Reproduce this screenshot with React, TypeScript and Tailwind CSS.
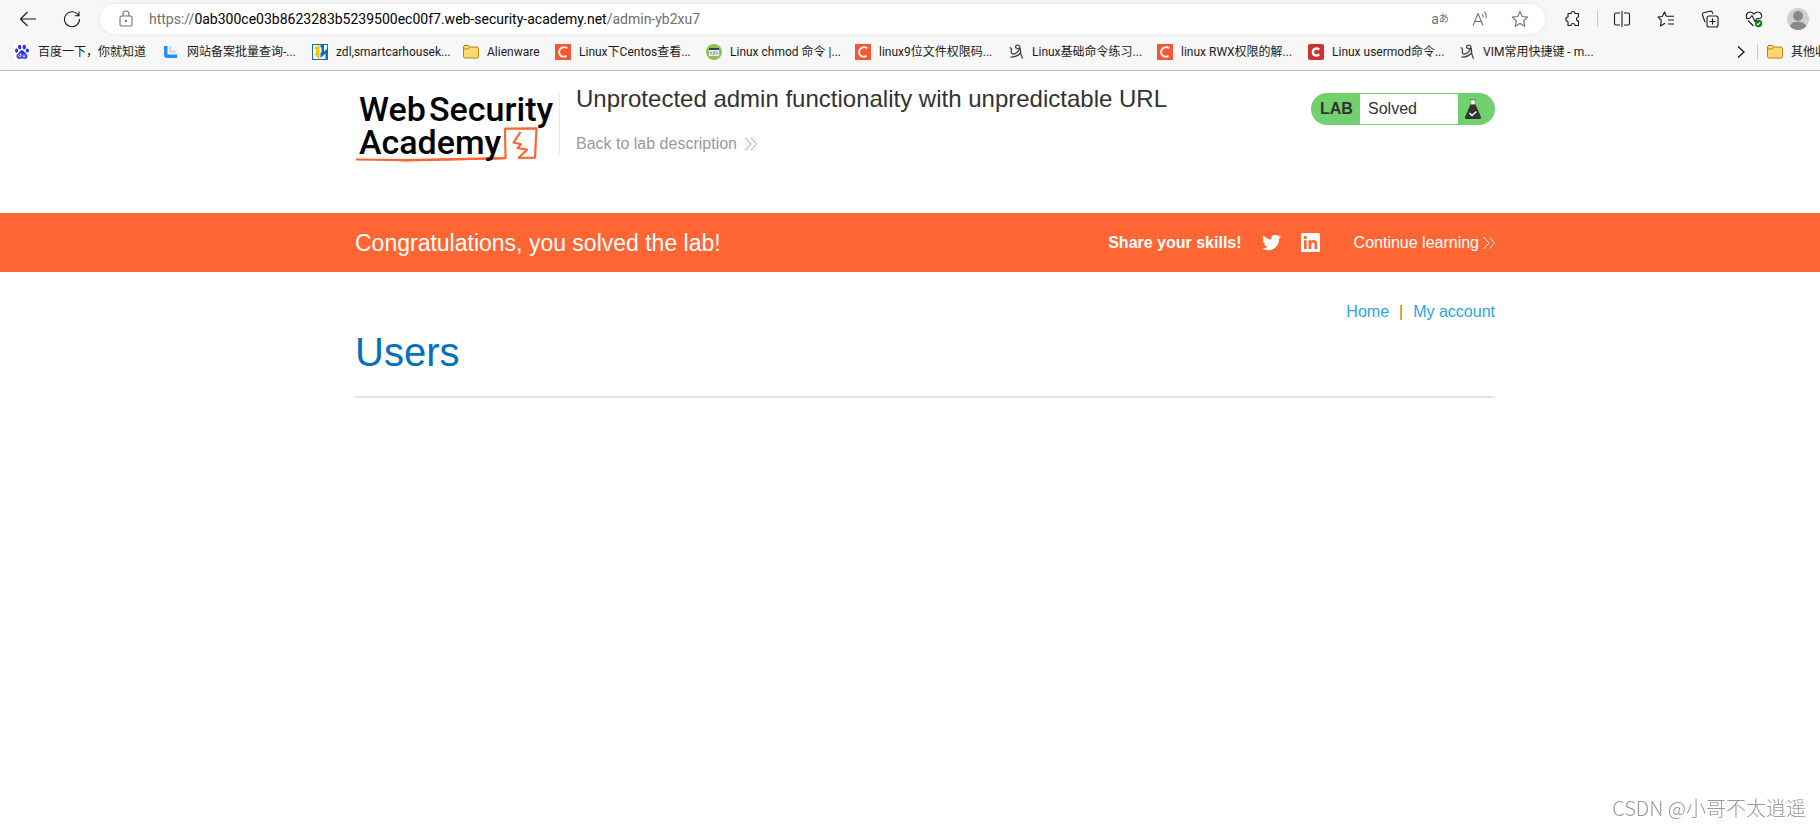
import type { ReactNode } from 'react'

function BaiduIcon() {
  return (
    <svg viewBox="0 0 16 16" className="w-4 h-4 shrink-0">
      <rect width="16" height="16" fill="#fff" />
      <g fill="#2932e1">
        <ellipse cx="5.7" cy="3.1" rx="1.7" ry="2.3" />
        <ellipse cx="10.3" cy="3.1" rx="1.7" ry="2.3" />
        <ellipse cx="2.6" cy="6.6" rx="1.6" ry="2.1" />
        <ellipse cx="13.4" cy="6.6" rx="1.6" ry="2.1" />
        <path d="M8 6.2c1.8 0 2.3 1.6 3.5 2.7 1.4 1.200 2.300 2.300 1.800 4.100-.5 1.700-2 2-3.300 1.700-1.300-.3-2.700-.3-4 0-1.300.3-2.800 0-3.300-1.700-.5-1.800.4-2.900 1.800-4.100C5.700 7.800 6.200 6.200 8 6.200Z" />
      </g>
      <path d="M6.800 9v3.800H5.500a1 1 0 0 1 0-2.200h1.300M9 10.500v2.300h2v-2.300" fill="none" stroke="#fff" strokeWidth=".8" />
    </svg>
  )
}

function FilingIcon() {
  return (
    <svg viewBox="0 0 16 16" className="w-4 h-4 shrink-0">
      <path d="M1 2h3.500v8.500H14V14H4a3 3 0 0 1-3-3V2Z" fill="#1e90ff" />
      <path d="M6 2h2.500v4.500H13V9H6V2Z" fill="#d3dbe2" />
    </svg>
  )
}

function ZdlIcon() {
  return (
    <svg viewBox="0 0 16 16" className="w-4 h-4 shrink-0">
      <rect x=".5" y=".5" width="15" height="15" fill="#fff" stroke="#0a6ebd" />
      <path d="M3 3 7.500 1v14H6.500L2 9.500h2V5L2 5.500Z" fill="#f5c400" />
      <path d="M8.500 1H12v6.500L15 5v10h-1.500V9.500L8.500 14V9L9.500 8V3.500H8.500Z" fill="#0a6ebd" />
    </svg>
  )
}

function FolderIcon() {
  return (
    <svg viewBox="0 0 16 16" className="w-4 h-4 shrink-0" fill="#ffd970" stroke="#b8860b">
      <path d="M.5 4V3A1.500 1.500 0 0 1 2 1.500h3.500L7.200 3H14a1.500 1.500 0 0 1 1.500 1.500v8A1.500 1.500 0 0 1 14 14H2a1.500 1.500 0 0 1-1.500-1.500V4Z" />
      <path d="M.5 5h4.700l2-2" fill="none" />
    </svg>
  )
}

function CsdnIcon() {
  return (
    <svg viewBox="0 0 16 16" className="w-4 h-4 shrink-0">
      <rect width="16" height="16" fill="#fc5531" />
      <path d="M12.200 4.300C9.500 2.300 4.300 3 4.100 8c0 5 4.600 5.400 7.600 3.900" fill="none" stroke="#fff" strokeWidth="1.800" />
    </svg>
  )
}

function RedCIcon() {
  return (
    <svg viewBox="0 0 16 16" className="w-4 h-4 shrink-0">
      <rect width="16" height="16" rx="2" fill="#d1302a" />
      <path d="M11.200 5.500C9 3.600 5 4.200 4.900 8c0 3.900 4 4.300 6.300 2.500" fill="none" stroke="#fff" strokeWidth="2.400" />
    </svg>
  )
}

function RunoobIcon() {
  return (
    <svg viewBox="0 0 16 16" className="w-4 h-4 shrink-0">
      <circle cx="8" cy="8" r="8" fill="#8cc152" />
      <path d="M3 4h10v8H3Z" fill="#e8eef2" />
      <path d="M3 4h10v2H3Z" fill="#33475b" />
      <path d="m6 7.500-1.500 1.500L6 10.500m4-3L11.500 9 10 10.500M8.600 7.300l-1.200 3.400" fill="none" stroke="#33475b" strokeWidth=".8" />
    </svg>
  )
}

function ScribbleIcon() {
  return (
    <svg viewBox="0 0 16 16" className="w-4 h-4 shrink-0" fill="none" stroke="#444" strokeWidth="1.300">
      <path d="M1.500 4c1.500-.6 2.200.5 1.900 2.500-.4 3 .8 4 3.100 3.300 3-1 5.600-4.500 5.400-7C11.700.8 8 .5 7.500 2.600c-.3 2 2.500 2.600 4.600 1.200" />
      <path d="M12.200 4c0 4 .6 7.500 2.300 10.700M2.500 13c4 .3 7.500-1.200 9.700-4" />
    </svg>
  )
}

const bookmarks = [
  { title: '百度一下，你就知道', icon: BaiduIcon, width: 'w-[149px]' },
  { title: '网站备案批量查询-...', icon: FilingIcon, width: 'w-[149px]' },
  { title: 'zdl,smartcarhousek...', icon: ZdlIcon, width: 'w-[151px]' },
  { title: 'Alienware', icon: FolderIcon, width: 'w-[92px]' },
  { title: 'Linux下Centos查看...', icon: CsdnIcon, width: 'w-[151px]' },
  { title: 'Linux chmod 命令 |...', icon: RunoobIcon, width: 'w-[149px]' },
  { title: 'linux9位文件权限码...', icon: CsdnIcon, width: 'w-[153px]' },
  { title: 'Linux基础命令练习...', icon: ScribbleIcon, width: 'w-[149px]' },
  { title: 'linux RWX权限的解...', icon: CsdnIcon, width: 'w-[151px]' },
  { title: 'Linux usermod命令...', icon: RedCIcon, width: 'w-[151px]' },
  { title: 'VIM常用快捷键 - m...', icon: ScribbleIcon, width: 'w-[151px]' },
]

function ToolButton({ label, children }: { label: string; children: ReactNode }) {
  return (
    <button type="button" aria-label={label} className="w-8 h-[30px] shrink-0 flex items-center justify-center">
      {children}
    </button>
  )
}

function LineIcon({ children }: { children: ReactNode }) {
  return (
    <svg viewBox="0 0 18 18" className="w-[18px] h-[18px]" fill="none" stroke="currentColor" strokeWidth="1.100" strokeLinejoin="round">
      {children}
    </svg>
  )
}

function BrowserBar() {
  return (
    <div className="bg-[#f7f7f7] border-b border-[#b8b8b8] pb-1 overflow-hidden text-[#1b1b1b] font-[Roboto,'Noto_Sans_CJK_SC',sans-serif]">
      <div className="flex items-center gap-3 h-[38px] pl-3 pr-1.5">
        <ToolButton label="后退">
          <LineIcon>
            <path d="M17 9H1.500M8.500 2 1.500 9l7 7" />
          </LineIcon>
        </ToolButton>
        <ToolButton label="刷新">
          <LineIcon>
            <path d="M15.500 5.500A7.500 7.500 0 1 0 16.500 9M16 1.500v4.300h-4.300" />
          </LineIcon>
        </ToolButton>
        <div className="flex-1 min-w-0 h-[30px] flex items-center bg-white rounded-full shadow-[0_0_4px_rgba(0,0,0,0.08)] pl-[10px] pr-[9px] text-[#707070]">
          <ToolButton label="查看站点信息">
            <LineIcon>
              <rect x="3" y="6" width="12" height="10" rx="1.500" />
              <path d="M6 6V4a3 3 0 0 1 6 0v2" />
              <circle cx="9" cy="11" r=".6" fill="currentColor" />
            </LineIcon>
          </ToolButton>
          <div
            role="textbox"
            aria-label="地址栏"
            contentEditable
            suppressContentEditableWarning
            className="flex-1 min-w-0 ml-[7px] text-sm whitespace-nowrap overflow-hidden outline-none"
          >
            https://<span className="text-black">0ab300ce03b8623283b5239500ec00f7.web-security-academy.net</span>/admin-yb2xu7
          </div>
          <div className="flex items-center gap-2">
            <ToolButton label="翻译">
              <span className="text-sm">a</span>
              <span className="text-[10px] leading-5">あ</span>
            </ToolButton>
            <ToolButton label="大声朗读">
              <LineIcon>
                <path d="m2 15.500 5-12 5 12M3.800 11.500h6.400M11 4c1 .8 1.300 2 1 3.300M13.200 2c1.900 1.500 2.400 3.800 1.800 6" />
              </LineIcon>
            </ToolButton>
            <ToolButton label="收藏此页面">
              <LineIcon>
                <path d="m9 1.500 2.300 5 5.400.6-4 3.700 1.100 5.400L9 13.500l-4.800 2.700 1.100-5.400-4-3.700 5.400-.6Z" />
              </LineIcon>
            </ToolButton>
          </div>
        </div>
        <div className="flex items-center gap-2">
          <ToolButton label="扩展">
            <LineIcon>
              <path d="M4 3.500h3a2 2 0 0 1 4 0h3.500V7a2 2 0 0 0 0 4v4.500H11a2 2 0 0 0-4 0H4V11.500a2.200 2.200 0 0 1 0-4.500Z" />
            </LineIcon>
          </ToolButton>
          <span className="w-px h-4 bg-[#c8c8c8]" />
        </div>
        <div className="flex items-center gap-3 -ml-1">
          <ToolButton label="拆分屏幕">
            <LineIcon>
              <path d="M7 3H3a1.500 1.500 0 0 0-1.500 1.500v9A1.500 1.500 0 0 0 3 15h4M11 3h4a1.500 1.500 0 0 1 1.500 1.500v9A1.500 1.500 0 0 1 15 15h-4M9 1v16" />
            </LineIcon>
          </ToolButton>
          <ToolButton label="收藏夹">
            <LineIcon>
              <path d="M9.200 6.200 7.500 2 5.300 6.500 1 7l3.300 3.200-.9 5.800L8 13.200M9.200 6.200H17M11 10h6M11 14h6" />
            </LineIcon>
          </ToolButton>
          <ToolButton label="集锦">
            <LineIcon>
              <rect x="6" y="6" width="11" height="11" rx="2" />
              <path d="M11.500 8.500v6M8.500 11.500h6M4 12.200 1.500 5A1.800 1.800 0 0 1 2.600 2.700L9 1.200c1.500-.3 2.300.5 2.600 1.800l.2.800" />
            </LineIcon>
          </ToolButton>
          <ToolButton label="浏览器概要">
            <LineIcon>
              <path d="M2 8C-.2 4 4.500-.5 9 4c4.500-4.500 9.200 0 7 4M1 8.500h3.500L7 5.500l3 6 1.800-3h4M3 10.500l5.500 5.500" />
              <circle cx="13.500" cy="13.500" r="3.700" fill="#107c10" stroke="none" />
              <path d="m11.800 13.700 1.200 1.100 2.200-2.400" stroke="#fff" />
            </LineIcon>
          </ToolButton>
          <ToolButton label="个人资料">
            <svg viewBox="0 0 22 22" className="w-[22px] h-[22px] shrink-0">
              <circle cx="11" cy="11" r="11" fill="#d2d0ce" />
              <circle cx="11" cy="8" r="5" fill="#8a8886" />
              <path d="M3 18.500C4 15 7 13.800 11 13.800s7 1.200 8 4.700a11 11 0 0 1-16 0Z" fill="#8a8886" />
            </svg>
          </ToolButton>
        </div>
      </div>

      <div className="flex items-center h-7 pl-[14px] text-xs">
        <nav aria-label="收藏夹栏" className="flex-1 min-w-0 flex items-center overflow-hidden">
          {bookmarks.map((bookmark) => (
            <a key={bookmark.title} href="#" className={`shrink-0 flex items-center gap-2 whitespace-nowrap ${bookmark.width}`}>
              <bookmark.icon />
              {bookmark.title}
            </a>
          ))}
        </nav>
        <button type="button" aria-label="更多收藏夹" className="w-8 h-6 flex items-center justify-center">
          <svg viewBox="0 0 8 12" className="w-2 h-3" fill="none" stroke="currentColor" strokeWidth="1.400">
            <path d="m1 .5 6 5.500-6 5.500" />
          </svg>
        </button>
        <span className="w-px h-4 bg-[#c8c8c8]" />
        <a href="#" className="w-[62px] pl-[9px] flex items-center gap-2 whitespace-nowrap overflow-hidden">
          <FolderIcon />
          其他收藏夹
        </a>
      </div>
    </div>
  )
}

function AcademyLogo() {
  return (
    <svg viewBox="0 -8 204 80" className="w-[204px] h-20 shrink-0" role="img" aria-label="Web Security Academy">
      <g fill="none" stroke="#ff6633" strokeWidth="2.200" strokeLinejoin="round">
        <path d="m1 66.500 50 .7 99.500-2-.5-29.500 31.500-.3-1.500 29.200-17 .2" />
        <path d="m165.500 39-7 10.500 7.500 1.800-3.500 3.700 9.500 1.700-8 7.800" />
      </g>
      <path d="m1 66 50 .4 99-2v1.800L51 68.500Z" fill="#ff6633" />
      <g fontFamily="Roboto, sans-serif" fontWeight="500" fontSize="34" fill="#000">
        <text x="4" y="28">Web</text>
        <text x="74" y="28">Security</text>
        <text x="4" y="61">Academy</text>
      </g>
    </svg>
  )
}

function DoubleChevron() {
  return (
    <svg viewBox="0 0 12 14" className="w-3 h-[14px] shrink-0" fill="none" stroke="currentColor" strokeWidth=".9">
      <path d="m.5 1 5.500 6-5.500 6M6 1l5.500 6L6 13" />
    </svg>
  )
}

function LabStatus() {
  return (
    <div className="flex items-center h-8 mt-2 rounded-full bg-[#70d16e] text-base leading-6 text-[#333332]">
      <span className="w-[49px] pl-[9px] font-bold">LAB</span>
      <span className="w-[98px] h-[30px] flex items-center pl-2 bg-white">Solved</span>
      <span className="w-[37px] pl-[7px]">
        <svg viewBox="0 0 16 20" className="w-4 h-5">
          <path d="M5 .5h6" stroke="#777" />
          <path d="M6 1h4v5H6Z" fill="#fff" stroke="#999" strokeWidth=".6" />
          <path d="M5.500 5.500h5L16 18a1.500 1.500 0 0 1-1.500 2h-13A1.500 1.500 0 0 1 0 18Z" fill="#333332" />
          <path d="m4.500 14 2.500 2.500 4.500-4" fill="none" stroke="#fff" strokeWidth="1.400" />
        </svg>
      </span>
    </div>
  )
}

function Container({ children }: { children: ReactNode }) {
  return <div className="w-full max-w-[1140px] mx-auto">{children}</div>
}

export default function App() {
  return (
    <div className="min-h-screen bg-white text-base leading-6 font-['Liberation_Sans',Arial,sans-serif]">
      <BrowserBar />

      <header className="pl-[30px] pt-[14px] pb-12">
        <Container>
          <div className="flex items-start">
            <a href="#" className="flex">
              <AcademyLogo />
            </a>
            <span className="w-px h-[62px] mt-2 bg-[#e5e5e5]" />
            <div className="flex-1 min-w-0 pl-4">
              <h2 className="text-2xl leading-7 text-[#333332]">Unprotected admin functionality with unpredictable URL</h2>
              <a href="#" className="inline-flex items-center gap-2 mt-[19px] text-[#999]">
                Back to lab description
                <DoubleChevron />
              </a>
            </div>
            <LabStatus />
          </div>
        </Container>
      </header>

      <section className="pl-[30px] bg-[#ff6633] text-white">
        <Container>
          <div className="flex items-center h-[59px]">
            <h4 className="flex-1 text-[23px] leading-7">Congratulations, you solved the lab!</h4>
            <span className="font-bold">Share your skills!</span>
            <a href="#" aria-label="Twitter" className="ml-5">
              <svg viewBox="0 0 24 24" className="w-[19px] h-[19px]" fill="currentColor">
                <path d="M23.950 4.570a10 10 0 0 1-2.820.780 4.960 4.960 0 0 0 2.160-2.720c-.950.550-2 .950-3.130 1.180a4.920 4.920 0 0 0-8.380 4.480C7.690 8.100 4.070 6.130 1.640 3.160a4.820 4.820 0 0 0-.660 2.480c0 1.710.870 3.210 2.190 4.100a4.900 4.900 0 0 1-2.230-.620v.060a4.920 4.920 0 0 0 3.950 4.830 5 5 0 0 1-2.210.080 4.940 4.940 0 0 0 4.600 3.420A9.870 9.870 0 0 1 0 19.540a13.990 13.990 0 0 0 7.550 2.210c9.050 0 14-7.500 14-13.980 0-.210 0-.420-.020-.630a9.940 9.940 0 0 0 2.460-2.550Z" />
              </svg>
            </a>
            <a href="#" aria-label="LinkedIn" className="ml-5">
              <svg viewBox="0 0 19 19" className="w-[19px] h-[19px]">
                <rect width="19" height="19" rx="1.500" fill="#fff" />
                <path d="M3 7.200h2.700V16H3ZM7.500 7.200h2.600v1.200C10.800 7.400 11.700 7 12.900 7c2.500 0 3.300 1.600 3.300 4.100V16h-2.700v-4.400c0-1.300-.3-2.200-1.500-2.200-1.300 0-1.800.9-1.800 2.200V16H7.500Z" fill="#ff6633" />
                <circle cx="4.350" cy="4.400" r="1.600" fill="#ff6633" />
              </svg>
            </a>
            <a href="#" className="flex items-center gap-1 ml-[34px]">
              Continue learning
              <DoubleChevron />
            </a>
          </div>
        </Container>
      </section>

      <main className="pl-[30px] pt-7">
        <Container>
          <nav className="flex justify-end gap-[10px] text-[#29a7e1]">
            <a href="#">Home</a>
            <span className="text-[#b07a30]">|</span>
            <a href="#">My account</a>
          </nav>
          <h1 className="mt-1 pb-5 text-[40px] leading-[48px] text-[#0071bc] border-b-2 border-[#e5e5e5]">Users</h1>
        </Container>
      </main>

      <div className="fixed right-[14px] bottom-1 text-xl leading-7 text-[#999] font-['Noto_Sans_CJK_SC',sans-serif] font-light">
        CSDN @小哥不太逍遥
      </div>
    </div>
  )
}
